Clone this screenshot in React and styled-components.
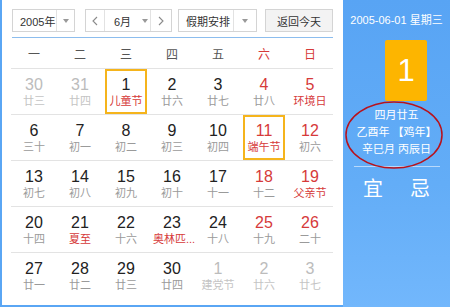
import React from 'react';
import styled, { createGlobalStyle } from 'styled-components';

const Global = createGlobalStyle`
  html, body { margin: 0; padding: 0; background: #fff; }
  body { font-family: "Liberation Sans", "Noto Sans CJK SC", sans-serif; }
`;

const BLUE = '#5aa6f4';
const RED = '#d63a3a';

const Widget = styled.div`
  width: 450px;
  height: 307px;
  display: flex;
  overflow: hidden;
`;

const Main = styled.div`
  width: 343px;
  height: 307px;
  box-sizing: border-box;
  border-left: 2px solid ${BLUE};
  border-bottom: 2px solid ${BLUE};
  padding: 9px 10px 0 9px;
  background: #fff;
`;

const Toolbar = styled.div`
  display: flex;
  height: 23px;
  margin-left: 1px;
`;

const Box = styled.div`
  box-sizing: border-box;
  width: ${p => p.$w}px;
  flex: none;
  margin-right: ${p => p.$gap || 0}px;
  height: 23px;
  border: 1px solid #d4d4d4;
  display: flex;
  font-size: 11px;
  color: #333;
  white-space: nowrap;
  background: ${p => (p.$btn ? '#f3f3f3' : '#fff')};
  justify-content: ${p => (p.$btn ? 'center' : 'flex-start')};
  align-items: center;
`;

const Label = styled.div`
  flex: 1;
  min-width: 0;
  height: 100%;
  display: flex;
  align-items: center;
  white-space: nowrap;
  padding-left: ${p => p.$pl || 0}px;
`;

const ArrowPart = styled.div`
  width: ${p => p.$w || 17}px;
  flex: none;
  height: 100%;
  border-left: 1px solid #e2e2e2;
  display: flex;
  align-items: center;
  justify-content: center;
`;

const Caret = styled.span`
  flex: none;
  width: 0;
  height: 0;
  border-left: 3px solid transparent;
  border-right: 3px solid transparent;
  border-top: 4px solid #999;
  margin-left: ${p => p.$ml || 0}px;
`;

const NavPart = styled.div`
  width: ${p => p.$w}px;
  flex: none;
  height: 100%;
  display: flex;
  align-items: center;
  justify-content: center;
  border-left: ${p => (p.$sepLeft ? '1px solid #e2e2e2' : 'none')};
  border-right: ${p => (p.$sepRight ? '1px solid #e2e2e2' : 'none')};
`;

const BlueRule = styled.div`
  height: 1px;
  background: #8cbdee;
  margin: 5px 0 0 1px;
`;

const WeekHeader = styled.div`
  display: grid;
  grid-template-columns: repeat(7, 46px);
  height: 30px;
  border-bottom: 1px solid #e3e3e3;
  align-items: center;
  font-size: 12px;
  color: #555;
  text-align: center;
`;

const WeekName = styled.div`
  color: ${p => (p.$red ? RED : '#555')};
`;

const DayRow = styled.div`
  display: grid;
  grid-template-columns: repeat(7, 46px);
  height: 45px;
  border-bottom: ${p => (p.$last ? 'none' : '1px solid #e3e3e3')};
`;

const Cell = styled.div`
  margin: 0 2px;
  box-sizing: border-box;
  height: 45px;
  border: 2px solid ${p => (p.$sel ? '#f5b41c' : 'transparent')};
  padding-top: 5px;
  text-align: center;
`;

const Num = styled.div`
  font-size: 16px;
  line-height: 18px;
  color: ${p => (p.$muted ? '#bcbcbc' : p.$red ? RED : '#222')};
`;

const Lunar = styled.div`
  font-size: 11px;
  line-height: 14px;
  white-space: nowrap;
  color: ${p => (p.$muted ? '#c4c4c4' : p.$fest ? RED : '#9a9a9a')};
`;

const Side = styled.div`
  flex: 1;
  position: relative;
  background: linear-gradient(180deg, #58a4f4 0%, #63adf7 60%, #72b7fc 100%);
  display: flex;
  flex-direction: column;
  align-items: center;
  color: #fff;
  padding-top: 13px;
`;

const SideDate = styled.div`
  font-size: 11px;
  line-height: 14px;
  white-space: nowrap;
`;

const BigDay = styled.div`
  width: 42px;
  height: 61px;
  margin: 13px 0 0 19px;
  background: #fdb500;
  border-radius: 2px;
  display: flex;
  align-items: center;
  justify-content: center;
  font-size: 31px;
  color: #fff;
`;

const LunarInfo = styled.div`
  margin-top: 6px;
  font-size: 11px;
  line-height: 17px;
  text-align: center;
  white-space: nowrap;
`;

const SideRule = styled.div`
  width: 86px;
  height: 1px;
  background: rgba(255, 255, 255, 0.55);
  margin-top: 8px;
`;

const YiJi = styled.div`
  margin-top: 9px;
  display: flex;
  gap: 27px;
  font-size: 20px;
  line-height: 24px;
  font-family: "Noto Sans CJK SC", sans-serif;
`;

const Mark = styled.svg`
  position: absolute;
  left: 0;
  top: 95px;
`;

const Chevron = ({ dir }) => (
  <svg width="6" height="10" viewBox="0 0 6 10">
    <polyline
      points={dir === 'left' ? '5,1 1,5 5,9' : '1,1 5,5 1,9'}
      fill="none"
      stroke="#8a8a8a"
      strokeWidth="1.1"
    />
  </svg>
);

const weeks = [
  [
    ['30', '廿三', 'm'], ['31', '廿四', 'm'], ['1', '儿童节', 'fs'], ['2', '廿六'], ['3', '廿七'], ['4', '廿八'], ['5', '环境日', 'f'],
  ],
  [
    ['6', '三十'], ['7', '初一'], ['8', '初二'], ['9', '初三'], ['10', '初四'], ['11', '端午节', 'fs'], ['12', '初六'],
  ],
  [
    ['13', '初七'], ['14', '初八'], ['15', '初九'], ['16', '初十'], ['17', '十一'], ['18', '十二'], ['19', '父亲节', 'f'],
  ],
  [
    ['20', '十四'], ['21', '夏至', 'f'], ['22', '十六'], ['23', '奥林匹...', 'f'], ['24', '十八'], ['25', '十九'], ['26', '二十'],
  ],
  [
    ['27', '廿一'], ['28', '廿二'], ['29', '廿三'], ['30', '廿四'], ['1', '建党节', 'm'], ['2', '廿六', 'm'], ['3', '廿七', 'm'],
  ],
];

const weekNames = ['一', '二', '三', '四', '五', '六', '日'];

export default function App() {
  return (
    <>
      <Global />
      <Widget>
        <Main>
          <Toolbar>
            <Box $w={63} $gap={10}>
              <Label $pl={7}>2005年</Label>
              <ArrowPart><Caret /></ArrowPart>
            </Box>
            <Box $w={87} $gap={6}>
              <NavPart $w={18} $sepRight><Chevron dir="left" /></NavPart>
              <Label $pl={9}>
                6月
                <Caret $ml={11} />
              </Label>
              <NavPart $w={20} $sepLeft><Chevron dir="right" /></NavPart>
            </Box>
            <Box $w={79} $gap={8}>
              <Label $pl={7}>假期安排</Label>
              <ArrowPart $w={22}><Caret /></ArrowPart>
            </Box>
            <Box $w={68} $btn>返回今天</Box>
          </Toolbar>
          <BlueRule />
          <WeekHeader>
            {weekNames.map((w, i) => (
              <WeekName key={w} $red={i >= 5}>{w}</WeekName>
            ))}
          </WeekHeader>
          {weeks.map((week, r) => (
            <DayRow key={r} $last={r === weeks.length - 1}>
              {week.map(([n, l, flags = ''], c) => {
                const muted = flags.includes('m');
                return (
                  <Cell key={c} $sel={flags.includes('s')}>
                    <Num $muted={muted} $red={c >= 5}>{n}</Num>
                    <Lunar $muted={muted} $fest={flags.includes('f')}>{l}</Lunar>
                  </Cell>
                );
              })}
            </DayRow>
          ))}
        </Main>
        <Side>
          <SideDate>2005-06-01 星期三</SideDate>
          <BigDay>1</BigDay>
          <LunarInfo>
            <div>四月廿五</div>
            <div>乙酉年 【鸡年】</div>
            <div>辛巳月 丙辰日</div>
          </LunarInfo>
          <SideRule />
          <YiJi>
            <span>宜</span>
            <span>忌</span>
          </YiJi>
          <Mark width="107" height="80" viewBox="0 0 107 80">
            <ellipse cx="51" cy="40" rx="48" ry="33" fill="none" stroke="#b8121c" strokeWidth="1.5" />
          </Mark>
        </Side>
      </Widget>
    </>
  );
}
